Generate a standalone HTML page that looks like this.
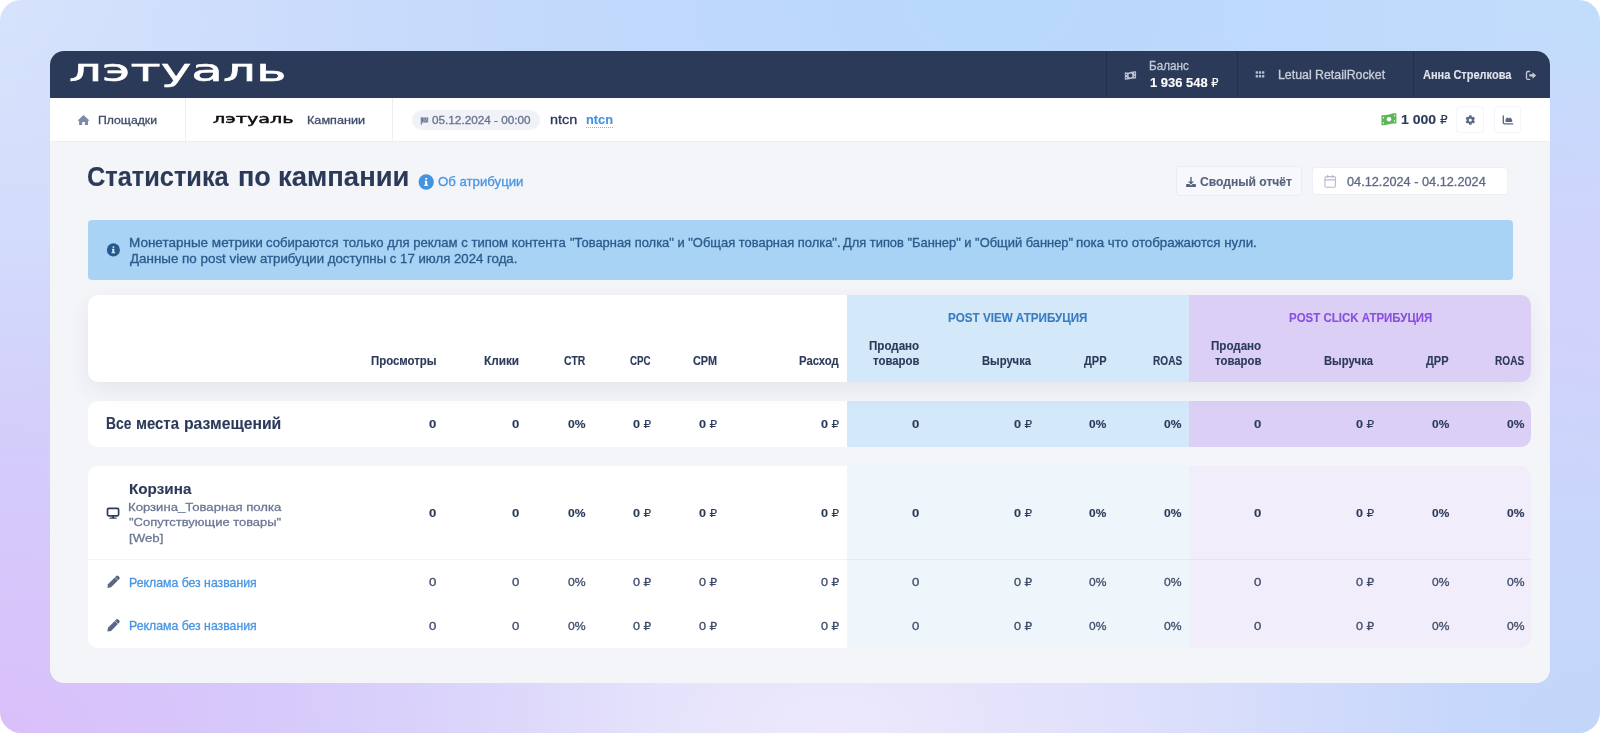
<!DOCTYPE html>
<html lang="ru"><head><meta charset="utf-8"><title>Статистика по кампании</title>
<style>
html,body{margin:0;padding:0;}
body{width:1600px;height:733px;position:relative;overflow:hidden;background:#fff;font-family:"Liberation Sans",sans-serif;}
.a{position:absolute;box-sizing:border-box;}
.bg{left:0;top:0;width:1600px;height:733px;border-radius:21px;
background:
 radial-gradient(ellipse 42% 68% at 0% 100%, #dabffa 0%, rgba(218,191,250,0) 100%),
 radial-gradient(ellipse 40% 60% at 52% 100%, #ede8fc 0%, rgba(237,232,252,0) 100%),
 radial-gradient(ellipse 35% 60% at 100% 100%, #c2d6fa 0%, rgba(194,214,250,0) 100%),
 radial-gradient(ellipse 30% 42% at 100% 46%, #d3d1fb 0%, rgba(211,209,251,0) 100%),
 radial-gradient(ellipse 62% 85% at 62% 0%, #b8d9fb 0%, rgba(184,217,251,0) 100%),
 radial-gradient(ellipse 40% 60% at 0% 0%, #d7e3fb 0%, rgba(215,227,251,0) 100%),
 radial-gradient(ellipse 30% 50% at 100% 0%, #c8e0fb 0%, rgba(200,224,251,0) 100%),
 #cfd7fb;}
.card{left:50px;top:50.6px;width:1500px;height:632.1px;border-radius:14px;background:#f4f5f9;overflow:hidden;}
.in{left:0;top:-0.6px;width:1500px;height:633px;}
.topbar{left:0;top:0;width:1500px;height:47.5px;background:#2c3a5a;}
.tdiv{top:0;width:1px;height:47.5px;background:#222e4a;}
.subnav{left:0;top:47.5px;width:1500px;height:44.4px;background:#fff;border-bottom:1px solid #eceef3;}
.sdiv{top:47.5px;width:1px;height:43.4px;background:#eceef3;}
.pill{left:362px;top:60px;width:128px;height:20px;border-radius:10px;background:#f0f2f7;}
.sbtn{top:56.3px;width:27.8px;height:27px;border:1px solid #f3f5f9;border-radius:4px;background:#fff;}
.btn{left:1126.25px;top:116.25px;width:125.75px;height:29.5px;border:1px solid #eaecf1;border-radius:4px;background:#f7f8fb;}
.dinput{left:1262px;top:117px;width:195.5px;height:28px;border:1px solid #eef0f4;border-radius:4px;background:#fff;}
.banner{left:37.5px;top:170.3px;width:1425.1px;height:60.1px;border-radius:4px;background:#a8d3f5;}
.tc{left:37.5px;width:1443.5px;border-radius:10px;background:#fff;overflow:hidden;}
.tc .b{position:absolute;left:759.25px;top:0;width:342.3px;height:100%;}
.tc .p{position:absolute;left:1101.55px;top:0;width:342px;height:100%;}
.hd{top:245px;height:86.75px;z-index:2;box-shadow:0 8px 22px rgba(40,50,90,0.075);}
.r1{top:351.25px;height:45.25px;}
.r2{top:416.25px;height:181.75px;}
.hd .b,.r1 .b{background:#d3e8f8;}
.hd .p,.r1 .p{background:#dccff5;}
.r2 .b{background:#eef6fb;}
.r2 .p{background:#f1edfb;}
.r2 .ln{position:absolute;left:0;top:92.5px;width:100%;height:1px;background:rgba(120,130,160,0.09);}
.dot{left:586.2px;top:127.2px;width:26.4px;height:0;border-top:1.3px dotted #7db5ea;}
.tl{left:0;top:0;width:1600px;height:733px;will-change:transform;z-index:5;}
svg.ic{z-index:4;}
.dot{z-index:4;}
.t{position:absolute;white-space:nowrap;line-height:1;transform-origin:0 0;display:block;color:#2c3a5a;-webkit-text-stroke:0.3px currentColor;}
.t.b{-webkit-text-stroke:0.12px currentColor;}
.r{font-family:"DejaVu Sans","Liberation Sans",sans-serif;font-weight:400;font-size:.95em;}
svg{position:absolute;overflow:visible;}

</style></head><body>
<div class="a bg"></div>
<div class="a card"><div class="a in">
  <div class="a topbar"></div>
  <div class="a tdiv" style="left:1056px"></div>
  <div class="a tdiv" style="left:1187px"></div>
  <div class="a tdiv" style="left:1363px"></div>
  <div class="a subnav"></div>
  <div class="a sdiv" style="left:135px"></div>
  <div class="a sdiv" style="left:342.3px"></div>
  <div class="a pill"></div>
  <div class="a sbtn" style="left:1406.25px"></div>
  <div class="a sbtn" style="left:1443.6px"></div>
  <div class="a btn"></div>
  <div class="a dinput"></div>
  <div class="a banner"></div>
  <div class="a tc hd"><div class="b"></div><div class="p"></div></div>
  <div class="a tc r1"><div class="b"></div><div class="p"></div></div>
  <div class="a tc r2"><div class="b"></div><div class="p"></div><div class="ln"></div></div>
</div></div>
<div class="a dot"></div>
<svg class="ic" width="1600" height="733" viewBox="0 0 1600 733" style="left:0;top:0">
  <!-- topbar: money -->
  <g fill="#b9c0cf">
    <path fill-rule="evenodd" d="M1124.8,72.3 Q1127.6,72.7 1130.4,71.9 T1136.1,71.2 V78.6 Q1133.2,78.2 1130.4,79 T1124.8,79.7 Z M1130.45,73.5 a1.95,1.95 0 1 0 0.01,0 Z M1125.8,74 h1 v1 h-1 Z M1134.1,72.7 h1 v1 h-1 Z M1125.8,77.3 h1 v1 h-1 Z M1134.1,76 h1 v1 h-1 Z"/>
  </g>
  <!-- topbar: grid -->
  <g fill="#b4bccd">
    <rect x="1255.7" y="71.3" width="2.3" height="2.5" rx=".3"/><rect x="1258.85" y="71.3" width="2.3" height="2.5" rx=".3"/><rect x="1262" y="71.3" width="2.3" height="2.5" rx=".3"/>
    <rect x="1255.7" y="75.1" width="2.3" height="2.5" rx=".3"/><rect x="1258.85" y="75.1" width="2.3" height="2.5" rx=".3"/><rect x="1262" y="75.1" width="2.3" height="2.5" rx=".3"/>
  </g>
  <!-- topbar: sign-out -->
  <path d="M1529.6,71.5 H1528 Q1526.5,71.5 1526.5,73 V77.9 Q1526.5,79.4 1528,79.4 H1529.6" fill="none" stroke="#c5cbd8" stroke-width="1.3" stroke-linecap="round"/>
  <path d="M1529.3,74.3 H1532.5 V72.2 L1536.1,75.45 L1532.5,78.7 V76.6 H1529.3 Z" fill="#c5cbd8"/>
  <!-- subnav: home -->
  <path fill="#7f8ba6" fill-rule="evenodd" d="M83.5,114.9 L89.2,120.3 L88.4,121.1 L88,120.8 V125.1 H84.9 V122 H82.2 V125.1 H79.1 V120.8 L78.7,121.1 L77.9,120.3 Z"/>
  <!-- subnav: flag -->
  <g fill="#6b7690">
    <rect x="420.8" y="117.1" width="1.1" height="7.6"/>
    <path d="M421.9,117.5 h6.3 v5 h-6.3 Z"/>
  </g>
  <g fill="#b9c0d0"><rect x="423.3" y="118.4" width="1.3" height="1.3"/><rect x="425.9" y="118.4" width="1.3" height="1.3"/><rect x="424.6" y="119.9" width="1.3" height="1.3"/><rect x="426.9" y="120.6" width="1.1" height="1.1"/><rect x="423" y="120.8" width="1.2" height="1"/></g>
  <!-- subnav: green money -->
  <path fill="#5cb55b" d="M1381.5,115 Q1385.2,115.6 1389,114.4 T1396.4,113.4 V123.6 Q1392.7,123 1389,124.2 T1381.5,125.2 Z"/>
  <circle cx="1389" cy="119.3" r="2.25" fill="#fff"/>
  <g fill="#fff"><circle cx="1383.4" cy="117.7" r=".75"/><circle cx="1394.5" cy="115.7" r=".75"/><circle cx="1383.4" cy="122.9" r=".75"/><circle cx="1394.5" cy="120.9" r=".75"/></g>
  <!-- subnav: gear -->
  <g fill="#5b6886" transform="translate(1470.3,120.1)">
    <circle r="3.5"/>
    <rect x="-1.35" y="-4.75" width="2.7" height="9.5" rx=".7"/>
    <rect x="-1.35" y="-4.75" width="2.7" height="9.5" rx=".7" transform="rotate(60)"/>
    <rect x="-1.35" y="-4.75" width="2.7" height="9.5" rx=".7" transform="rotate(120)"/>
    <circle r="1.55" fill="#fff"/>
  </g>
  <!-- subnav: chart -->
  <path d="M1503.3,116 V122.5 Q1503.3,123.9 1504.7,123.9 H1512.6" fill="none" stroke="#5b6886" stroke-width="1.4" stroke-linecap="round"/>
  <path d="M1505.5,121.9 V119.6 Q1506.6,117.3 1507.9,117.6 L1508.8,118.6 L1510,117.4 Q1511.7,118 1512.2,120.2 V121.9 Z" fill="#5b6886"/>
  <!-- heading: info -->
  <circle cx="426.2" cy="182" r="7.65" fill="#4393e0"/>
  <g fill="#fff"><circle cx="426.2" cy="178.7" r="1.05"/><path d="M424.8,180.7 h2.4 v4 h.9 v1.2 h-3.9 v-1.2 h.9 v-2.8 h-.3 Z"/></g>
  <!-- download -->
  <g fill="#56627f">
    <path d="M1190.3,177.1 h1.4 v4.3 h2.3 l-3,3 l-3,-3 h2.3 Z"/>
    <path d="M1187.2,184.1 h2.2 l1.6,1.3 l1.6,-1.3 h2.2 q1.2,0 1.2,1.2 v.6 q0,1.2 -1.2,1.2 h-7.6 q-1.2,0 -1.2,-1.2 v-.6 q0,-1.2 1.2,-1.2 Z"/>
  </g>
  <!-- calendar -->
  <g fill="none" stroke="#b4bbcb" stroke-width="1.1">
    <rect x="1324.9" y="176.6" width="10.6" height="10.7" rx="1.6"/>
    <path d="M1324.9,179.9 H1335.5 M1327.7,175.3 V177.3 M1332.7,175.3 V177.3" stroke-linecap="round"/>
  </g>
  <!-- banner info -->
  <circle cx="113.4" cy="249.9" r="6.55" fill="#265a8d"/>
  <g fill="#d6ebfb"><circle cx="113.4" cy="247.1" r=".95"/><path d="M112.1,248.8 h2.2 v3.4 h.8 v1.1 h-3.6 v-1.1 h.8 v-2.3 h-.2 Z"/></g>
  <!-- monitor -->
  <rect x="107.5" y="508.35" width="11.1" height="7.5" rx="1.3" fill="none" stroke="#2f3d5c" stroke-width="1.7"/>
  <path d="M112.1,516.2 h1.9 v1.3 h2 q.7,0 .7,.65 t-.7,.65 h-5.9 q-.7,0 -.7,-.65 t.7,-.65 h2 Z" fill="#2f3d5c"/>
  <!-- pencils -->
  <g id="pen1" fill="#5a6784">
    <path d="M107.4,587.9 L107.96,584.22 L114.75,577.43 L117.87,580.55 L111.08,587.34 Z"/>
    <path d="M115.35,576.83 L116.5,575.68 Q117.6,574.6 118.7,575.7 L119.6,576.6 Q120.7,577.7 119.62,578.8 L118.47,579.95 Z" transform="translate(-.35,.35)"/>
  </g>
  <g fill="#5a6784" transform="translate(0,43.55)">
    <path d="M107.4,587.9 L107.96,584.22 L114.75,577.43 L117.87,580.55 L111.08,587.34 Z"/>
    <path d="M115.35,576.83 L116.5,575.68 Q117.6,574.6 118.7,575.7 L119.6,576.6 Q120.7,577.7 119.62,578.8 L118.47,579.95 Z" transform="translate(-.35,.35)"/>
  </g>
</svg>


<div class="a tl">
<span class="t" style='left:68.51px;top:56.30px;font-size:30.5px;color:#fff;font-family:"DejaVu Sans", "Liberation Sans", sans-serif;transform:scaleX(1.6970);-webkit-text-stroke:0.5px #fff;'>лэтуаль</span>
<span class="t" style='left:1149.35px;top:60.30px;font-size:12.3px;color:#c3c9d6;transform:scaleX(0.9489);'>Баланс</span>
<span class="t b" style='left:1149.79px;top:76.30px;font-size:13.3px;font-weight:700;color:#fff;transform:scaleX(0.9742);'>1 936 548 <span class="r" style="font-size:0.88em">₽</span></span>
<span class="t" style='left:1277.79px;top:69.30px;font-size:12.2px;color:#c9ceda;transform:scaleX(1.0134);'>Letual RetailRocket</span>
<span class="t b" style='left:1423.13px;top:69.30px;font-size:12.4px;font-weight:700;color:#dfe3ea;transform:scaleX(0.8881);'>Анна Стрелкова</span>
<span class="t" style='left:98.05px;top:114.30px;font-size:11.6px;color:#3f4c6b;transform:scaleX(1.0547);'>Площадки</span>
<span class="t" style='left:213.22px;top:114.30px;font-size:11.8px;color:#111;font-family:"DejaVu Sans", "Liberation Sans", sans-serif;transform:scaleX(1.6266);-webkit-text-stroke:0.45px #111;'>лэтуаль</span>
<span class="t" style='left:306.86px;top:114.30px;font-size:11.6px;color:#3f4c6b;transform:scaleX(1.0902);'>Кампании</span>
<span class="t" style='left:432.39px;top:115.30px;font-size:11.4px;color:#66728d;transform:scaleX(1.0308);'>05.12.2024 - 00:00</span>
<span class="t" style='left:549.68px;top:114.30px;font-size:12.5px;transform:scaleX(1.1532);'>ntcn</span>
<span class="t b" style='left:585.88px;top:114.30px;font-size:12.5px;font-weight:700;color:#4393e0;transform:scaleX(1.0221);'>ntcn</span>
<span class="t b" style='left:1400.62px;top:113.30px;font-size:13.3px;font-weight:700;transform:scaleX(1.0570);'>1 000 <span class="r" style="font-size:0.86em">₽</span></span>
<span class="t b" style='left:87.31px;top:163.30px;font-size:27.6px;font-weight:700;transform:scaleX(0.9187);'>Статистика</span>
<span class="t b" style='left:238.21px;top:163.30px;font-size:27.6px;font-weight:700;transform:scaleX(0.9805);'>по</span>
<span class="t b" style='left:278.08px;top:163.30px;font-size:27.6px;font-weight:700;transform:scaleX(0.9945);'>кампании</span>
<span class="t" style='left:438.41px;top:176.30px;font-size:12.4px;color:#4a96e2;transform:scaleX(1.0655);'>Об атрибуции</span>
<span class="t b" style='left:1200.32px;top:176.30px;font-size:12.5px;font-weight:700;color:#56627f;transform:scaleX(0.9672);'>Сводный отчёт</span>
<span class="t" style='left:1346.54px;top:176.30px;font-size:12.4px;color:#5d6985;transform:scaleX(1.0272);'>04.12.2024 - 04.12.2024</span>
<span class="t" style='left:128.79px;top:237.30px;font-size:12.2px;color:#2b5b8c;transform:scaleX(1.1074);'>Монетарные метрики</span>
<span class="t" style='left:266.06px;top:237.30px;font-size:12.2px;color:#2b5b8c;transform:scaleX(1.0767);'>собираются</span>
<span class="t" style='left:343.18px;top:237.30px;font-size:12.2px;color:#2b5b8c;transform:scaleX(1.0752);'>только для реклам с типом контента</span>
<span class="t" style='left:570.37px;top:237.30px;font-size:12.2px;color:#2b5b8c;transform:scaleX(1.0609);'>"Товарная полка" и "Общая товарная полка".</span>
<span class="t" style='left:843.05px;top:237.30px;font-size:12.2px;color:#2b5b8c;transform:scaleX(1.0569);'>Для типов "Баннер" и "Общий баннер"</span>
<span class="t" style='left:1076.03px;top:237.30px;font-size:12.2px;color:#2b5b8c;transform:scaleX(1.0919);'>пока что отображаются нули.</span>
<span class="t" style='left:129.85px;top:253.30px;font-size:12.2px;color:#2b5b8c;transform:scaleX(1.0983);'>Данные по post view</span>
<span class="t" style='left:260.36px;top:253.30px;font-size:12.2px;color:#2b5b8c;transform:scaleX(1.0841);'>атрибуции доступны с 17 июля 2024 года.</span>
<span class="t b" style='left:371.38px;top:356.30px;font-size:11.9px;font-weight:700;transform:scaleX(0.9586);'>Просмотры</span>
<span class="t b" style='left:483.86px;top:356.30px;font-size:11.9px;font-weight:700;transform:scaleX(0.9928);'>Клики</span>
<span class="t b" style='left:563.71px;top:356.30px;font-size:11.9px;font-weight:700;transform:scaleX(0.8753);'>CTR</span>
<span class="t b" style='left:630.43px;top:356.30px;font-size:11.9px;font-weight:700;transform:scaleX(0.8203);'>CPC</span>
<span class="t b" style='left:693.39px;top:356.30px;font-size:11.9px;font-weight:700;transform:scaleX(0.9155);'>CPM</span>
<span class="t b" style='left:799.39px;top:356.30px;font-size:11.9px;font-weight:700;transform:scaleX(0.9488);'>Расход</span>
<span class="t b" style='left:868.97px;top:341.30px;font-size:11.9px;font-weight:700;transform:scaleX(0.9743);'>Продано</span>
<span class="t b" style='left:873.01px;top:356.30px;font-size:11.9px;font-weight:700;transform:scaleX(0.9591);'>товаров</span>
<span class="t b" style='left:982.19px;top:356.30px;font-size:11.9px;font-weight:700;transform:scaleX(0.9434);'>Выручка</span>
<span class="t b" style='left:1084.01px;top:356.30px;font-size:11.9px;font-weight:700;transform:scaleX(0.9261);'>ДРР</span>
<span class="t b" style='left:1152.56px;top:356.30px;font-size:11.9px;font-weight:700;transform:scaleX(0.8496);'>ROAS</span>
<span class="t b" style='left:1211.27px;top:341.30px;font-size:11.9px;font-weight:700;transform:scaleX(0.9743);'>Продано</span>
<span class="t b" style='left:1215.31px;top:356.30px;font-size:11.9px;font-weight:700;transform:scaleX(0.9591);'>товаров</span>
<span class="t b" style='left:1324.49px;top:356.30px;font-size:11.9px;font-weight:700;transform:scaleX(0.9434);'>Выручка</span>
<span class="t b" style='left:1426.31px;top:356.30px;font-size:11.9px;font-weight:700;transform:scaleX(0.9261);'>ДРР</span>
<span class="t b" style='left:1494.86px;top:356.30px;font-size:11.9px;font-weight:700;transform:scaleX(0.8496);'>ROAS</span>
<span class="t b" style='left:948.43px;top:312.30px;font-size:12.8px;font-weight:700;color:#3a7cc0;transform:scaleX(0.9088);'>POST VIEW АТРИБУЦИЯ</span>
<span class="t b" style='left:1288.54px;top:312.30px;font-size:12.8px;font-weight:700;color:#8a4fe0;transform:scaleX(0.8968);'>POST CLICK АТРИБУЦИЯ</span>
<span class="t b" style='left:429.44px;top:418.30px;font-size:11.6px;font-weight:700;transform:scaleX(1.1351);'>0</span>
<span class="t b" style='left:511.79px;top:418.30px;font-size:11.6px;font-weight:700;transform:scaleX(1.1351);'>0</span>
<span class="t b" style='left:567.73px;top:418.30px;font-size:11.6px;font-weight:700;transform:scaleX(1.0466);'>0%</span>
<span class="t b" style='left:633.46px;top:418.30px;font-size:11.6px;font-weight:700;transform:scaleX(1.0898);'>0 <span class="r">₽</span></span>
<span class="t b" style='left:699.21px;top:418.30px;font-size:11.6px;font-weight:700;transform:scaleX(1.0898);'>0 <span class="r">₽</span></span>
<span class="t b" style='left:821.46px;top:418.30px;font-size:11.6px;font-weight:700;transform:scaleX(1.0898);'>0 <span class="r">₽</span></span>
<span class="t b" style='left:912.19px;top:418.30px;font-size:11.6px;font-weight:700;transform:scaleX(1.1351);'>0</span>
<span class="t b" style='left:1013.81px;top:418.30px;font-size:11.6px;font-weight:700;transform:scaleX(1.0898);'>0 <span class="r">₽</span></span>
<span class="t b" style='left:1089.24px;top:418.30px;font-size:11.6px;font-weight:700;transform:scaleX(1.0279);'>0%</span>
<span class="t b" style='left:1164.23px;top:418.30px;font-size:11.6px;font-weight:700;transform:scaleX(1.0404);'>0%</span>
<span class="t b" style='left:1254.49px;top:418.30px;font-size:11.6px;font-weight:700;transform:scaleX(1.1351);'>0</span>
<span class="t b" style='left:1356.11px;top:418.30px;font-size:11.6px;font-weight:700;transform:scaleX(1.0898);'>0 <span class="r">₽</span></span>
<span class="t b" style='left:1431.54px;top:418.30px;font-size:11.6px;font-weight:700;transform:scaleX(1.0279);'>0%</span>
<span class="t b" style='left:1506.53px;top:418.30px;font-size:11.6px;font-weight:700;transform:scaleX(1.0404);'>0%</span>
<span class="t b" style='left:429.44px;top:507.30px;font-size:11.6px;font-weight:700;transform:scaleX(1.1351);'>0</span>
<span class="t b" style='left:511.79px;top:507.30px;font-size:11.6px;font-weight:700;transform:scaleX(1.1351);'>0</span>
<span class="t b" style='left:567.73px;top:507.30px;font-size:11.6px;font-weight:700;transform:scaleX(1.0466);'>0%</span>
<span class="t b" style='left:633.46px;top:507.30px;font-size:11.6px;font-weight:700;transform:scaleX(1.0898);'>0 <span class="r">₽</span></span>
<span class="t b" style='left:699.21px;top:507.30px;font-size:11.6px;font-weight:700;transform:scaleX(1.0898);'>0 <span class="r">₽</span></span>
<span class="t b" style='left:821.46px;top:507.30px;font-size:11.6px;font-weight:700;transform:scaleX(1.0898);'>0 <span class="r">₽</span></span>
<span class="t b" style='left:912.19px;top:507.30px;font-size:11.6px;font-weight:700;transform:scaleX(1.1351);'>0</span>
<span class="t b" style='left:1013.81px;top:507.30px;font-size:11.6px;font-weight:700;transform:scaleX(1.0898);'>0 <span class="r">₽</span></span>
<span class="t b" style='left:1089.24px;top:507.30px;font-size:11.6px;font-weight:700;transform:scaleX(1.0279);'>0%</span>
<span class="t b" style='left:1164.23px;top:507.30px;font-size:11.6px;font-weight:700;transform:scaleX(1.0404);'>0%</span>
<span class="t b" style='left:1254.49px;top:507.30px;font-size:11.6px;font-weight:700;transform:scaleX(1.1351);'>0</span>
<span class="t b" style='left:1356.11px;top:507.30px;font-size:11.6px;font-weight:700;transform:scaleX(1.0898);'>0 <span class="r">₽</span></span>
<span class="t b" style='left:1431.54px;top:507.30px;font-size:11.6px;font-weight:700;transform:scaleX(1.0279);'>0%</span>
<span class="t b" style='left:1506.53px;top:507.30px;font-size:11.6px;font-weight:700;transform:scaleX(1.0404);'>0%</span>
<span class="t" style='left:429.44px;top:576.30px;font-size:11.6px;color:#3f4c69;transform:scaleX(1.1351);'>0</span>
<span class="t" style='left:511.79px;top:576.30px;font-size:11.6px;color:#3f4c69;transform:scaleX(1.1351);'>0</span>
<span class="t" style='left:567.73px;top:576.30px;font-size:11.6px;color:#3f4c69;transform:scaleX(1.0532);'>0%</span>
<span class="t" style='left:633.46px;top:576.30px;font-size:11.6px;color:#3f4c69;transform:scaleX(1.0898);'>0 <span class="r">₽</span></span>
<span class="t" style='left:699.21px;top:576.30px;font-size:11.6px;color:#3f4c69;transform:scaleX(1.0898);'>0 <span class="r">₽</span></span>
<span class="t" style='left:821.46px;top:576.30px;font-size:11.6px;color:#3f4c69;transform:scaleX(1.0898);'>0 <span class="r">₽</span></span>
<span class="t" style='left:912.19px;top:576.30px;font-size:11.6px;color:#3f4c69;transform:scaleX(1.1351);'>0</span>
<span class="t" style='left:1013.81px;top:576.30px;font-size:11.6px;color:#3f4c69;transform:scaleX(1.0898);'>0 <span class="r">₽</span></span>
<span class="t" style='left:1089.23px;top:576.30px;font-size:11.6px;color:#3f4c69;transform:scaleX(1.0344);'>0%</span>
<span class="t" style='left:1164.23px;top:576.30px;font-size:11.6px;color:#3f4c69;transform:scaleX(1.0469);'>0%</span>
<span class="t" style='left:1254.49px;top:576.30px;font-size:11.6px;color:#3f4c69;transform:scaleX(1.1351);'>0</span>
<span class="t" style='left:1356.11px;top:576.30px;font-size:11.6px;color:#3f4c69;transform:scaleX(1.0898);'>0 <span class="r">₽</span></span>
<span class="t" style='left:1431.53px;top:576.30px;font-size:11.6px;color:#3f4c69;transform:scaleX(1.0344);'>0%</span>
<span class="t" style='left:1506.53px;top:576.30px;font-size:11.6px;color:#3f4c69;transform:scaleX(1.0469);'>0%</span>
<span class="t" style='left:429.44px;top:620.30px;font-size:11.6px;color:#3f4c69;transform:scaleX(1.1351);'>0</span>
<span class="t" style='left:511.79px;top:620.30px;font-size:11.6px;color:#3f4c69;transform:scaleX(1.1351);'>0</span>
<span class="t" style='left:567.73px;top:620.30px;font-size:11.6px;color:#3f4c69;transform:scaleX(1.0532);'>0%</span>
<span class="t" style='left:633.46px;top:620.30px;font-size:11.6px;color:#3f4c69;transform:scaleX(1.0898);'>0 <span class="r">₽</span></span>
<span class="t" style='left:699.21px;top:620.30px;font-size:11.6px;color:#3f4c69;transform:scaleX(1.0898);'>0 <span class="r">₽</span></span>
<span class="t" style='left:821.46px;top:620.30px;font-size:11.6px;color:#3f4c69;transform:scaleX(1.0898);'>0 <span class="r">₽</span></span>
<span class="t" style='left:912.19px;top:620.30px;font-size:11.6px;color:#3f4c69;transform:scaleX(1.1351);'>0</span>
<span class="t" style='left:1013.81px;top:620.30px;font-size:11.6px;color:#3f4c69;transform:scaleX(1.0898);'>0 <span class="r">₽</span></span>
<span class="t" style='left:1089.23px;top:620.30px;font-size:11.6px;color:#3f4c69;transform:scaleX(1.0344);'>0%</span>
<span class="t" style='left:1164.23px;top:620.30px;font-size:11.6px;color:#3f4c69;transform:scaleX(1.0469);'>0%</span>
<span class="t" style='left:1254.49px;top:620.30px;font-size:11.6px;color:#3f4c69;transform:scaleX(1.1351);'>0</span>
<span class="t" style='left:1356.11px;top:620.30px;font-size:11.6px;color:#3f4c69;transform:scaleX(1.0898);'>0 <span class="r">₽</span></span>
<span class="t" style='left:1431.53px;top:620.30px;font-size:11.6px;color:#3f4c69;transform:scaleX(1.0344);'>0%</span>
<span class="t" style='left:1506.53px;top:620.30px;font-size:11.6px;color:#3f4c69;transform:scaleX(1.0469);'>0%</span>
<span class="t b" style='left:105.64px;top:416.30px;font-size:16px;font-weight:700;transform:scaleX(0.8622);'>Все</span>
<span class="t b" style='left:135.97px;top:416.30px;font-size:16px;font-weight:700;transform:scaleX(0.9302);'>места</span>
<span class="t b" style='left:183.77px;top:416.30px;font-size:16px;font-weight:700;transform:scaleX(0.9839);'>размещений</span>
<span class="t b" style='left:128.55px;top:481.30px;font-size:15px;font-weight:700;transform:scaleX(1.0162);'>Корзина</span>
<span class="t" style='left:128.34px;top:502.30px;font-size:11.8px;color:#6b7793;transform:scaleX(1.1119);'>Корзина_Товарная полка</span>
<span class="t" style='left:128.85px;top:517.30px;font-size:11.8px;color:#6b7793;transform:scaleX(1.0964);'>"Сопутствующие товары"</span>
<span class="t" style='left:128.50px;top:533.30px;font-size:11.8px;color:#6b7793;transform:scaleX(1.1250);'>[Web]</span>
<span class="t" style='left:128.52px;top:578.30px;font-size:11.9px;color:#4a96e2;transform:scaleX(1.0321);'>Реклама без названия</span>
<span class="t" style='left:128.52px;top:621.30px;font-size:11.9px;color:#4a96e2;transform:scaleX(1.0321);'>Реклама без названия</span>
</div></body></html>
